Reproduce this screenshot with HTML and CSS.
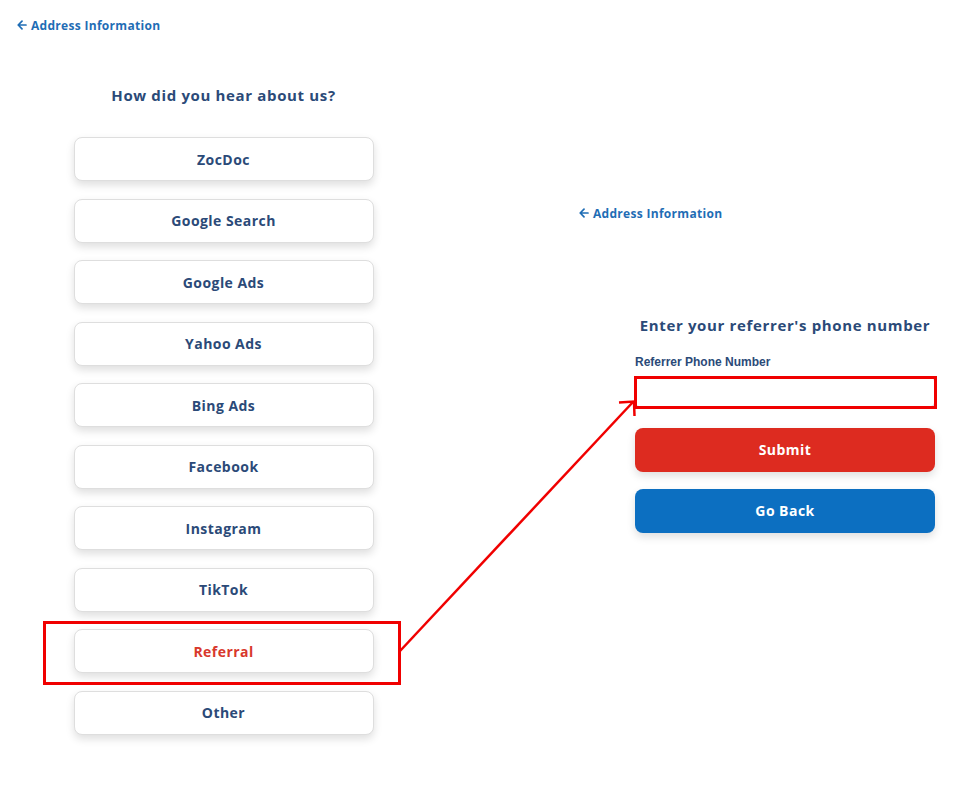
FILE: index.html
```html
<!DOCTYPE html>
<html lang="en">
<head>
<meta charset="utf-8">
<title>How did you hear about us?</title>
<link rel="stylesheet" href="styles.css">
</head>
<body>
<div class="page">
  <section class="panel left">
    <a class="back" href="#"><svg class="arr" viewBox="0 0 10 10" width="10" height="10"><path d="M9 5H1.5M5 1.2L1.2 5 5 8.8" fill="none" stroke="currentColor" stroke-width="1.7" stroke-linecap="round" stroke-linejoin="round"/></svg>Address Information</a>
    <h2 class="title">How did you hear about us?</h2>
    <div class="options">
      <button class="opt">ZocDoc</button>
      <button class="opt">Google Search</button>
      <button class="opt">Google Ads</button>
      <button class="opt">Yahoo Ads</button>
      <button class="opt">Bing Ads</button>
      <button class="opt">Facebook</button>
      <button class="opt">Instagram</button>
      <button class="opt">TikTok</button>
      <button class="opt opt-active">Referral</button>
      <button class="opt">Other</button>
    </div>
  </section>
  <section class="panel right">
    <a class="back" href="#"><svg class="arr" viewBox="0 0 10 10" width="10" height="10"><path d="M9 5H1.5M5 1.2L1.2 5 5 8.8" fill="none" stroke="currentColor" stroke-width="1.7" stroke-linecap="round" stroke-linejoin="round"/></svg>Address Information</a>
    <div class="form">
      <h2 class="title">Enter your referrer's phone number</h2>
      <label class="label" for="phone">Referrer Phone Number</label>
      <input class="input" id="phone" type="tel">
      <button class="btn btn-red">Submit</button>
      <button class="btn btn-blue">Go Back</button>
    </div>
  </section>
</div>
<svg class="annot" width="980" height="788" viewBox="0 0 980 788">
  <rect x="44.5" y="622.5" width="355" height="61" fill="none" stroke="#f00000" stroke-width="3"/>
  <rect x="635.5" y="377.5" width="300" height="30" fill="none" stroke="#f00000" stroke-width="3"/>
  <line x1="400" y1="651" x2="633" y2="402" stroke="#f00000" stroke-width="2.5"/>
  <polyline points="619,402.5 634,401.5 634.5,416" fill="none" stroke="#f00000" stroke-width="2.5"/>
</svg>
</body>
</html>
```
FILE: styles.css
```css
* { box-sizing: border-box; }
html, body { margin: 0; padding: 0; background: #fff; }
body {
  width: 980px;
  height: 788px;
  overflow: hidden;
  position: relative;
  font-family: "Open Sans", "DejaVu Sans", sans-serif;
}
.page { display: flex; align-items: flex-start; }
.panel { flex: none; }
.left { width: 447px; padding-top: 17px; }
.right { margin-left: 115px; padding-top: 205px; width: 418px; }

.back {
  display: flex;
  align-items: center;
  gap: 4px;
  padding-left: 17px;
  height: 16px;
  font-size: 12px;
  font-weight: 700;
  letter-spacing: 0.3px;
  color: #1f6db5;
  text-decoration: none;
  white-space: nowrap;
}
.arr { flex: none; }

.title {
  margin: 0;
  font-size: 15px;
  line-height: 20px;
  font-weight: 700;
  letter-spacing: 0.65px;
  color: #2b4a78;
  text-align: center;
  white-space: nowrap;
}
.left .title { margin-top: 52px; }

.options {
  display: flex;
  flex-direction: column;
  gap: 17.55px;
  width: 300px;
  margin: 32px auto 0;
}
.opt {
  height: 44px;
  border: 1px solid #dedede;
  border-radius: 8px;
  background: #fff;
  box-shadow: 0 4px 9px rgba(0, 0, 0, 0.13);
  font-family: inherit;
  font-size: 14px;
  font-weight: 700;
  letter-spacing: 0.45px;
  color: #2b4a78;
  padding: 0;
}
.opt-active { color: #d8382c; }

.form {
  display: flex;
  flex-direction: column;
  width: 300px;
  margin-left: 73px;
}
.form .title { margin-top: 94px; }
.label {
  margin-top: 20px;
  font-family: "Liberation Sans", Arial, sans-serif;
  font-size: 12px;
  line-height: 14px;
  font-weight: 700;
  color: #2b4a78;
}
.input {
  margin-top: 8px;
  height: 30px;
  width: 300px;
  border: 1px solid #d0d0d0;
  border-radius: 4px;
  background: #fff;
}
.btn {
  height: 44px;
  border: none;
  border-radius: 8px;
  font-family: inherit;
  font-size: 14px;
  font-weight: 700;
  letter-spacing: 0.45px;
  color: #fff;
  box-shadow: 0 4px 9px rgba(0, 0, 0, 0.13);
  padding: 0 0 1px;
}
.btn-red { margin-top: 21px; background: #dd2b20; }
.btn-blue { margin-top: 17px; background: #0c6fc1; }

.annot {
  position: absolute;
  left: 0;
  top: 0;
  pointer-events: none;
}
```
